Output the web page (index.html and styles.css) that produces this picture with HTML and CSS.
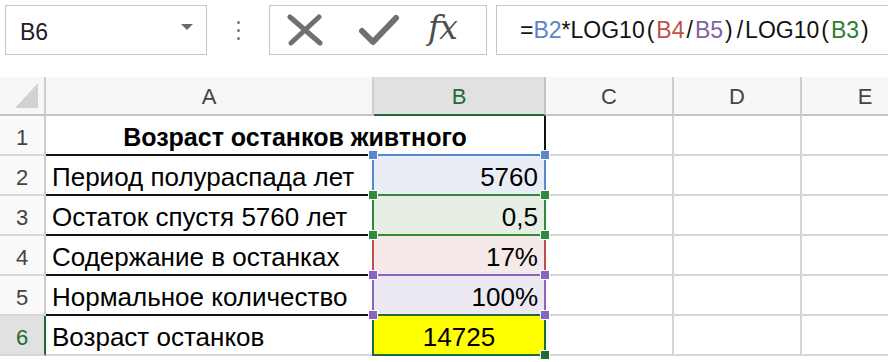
FILE: index.html
```html
<!DOCTYPE html>
<html>
<head>
<meta charset="UTF-8">
<title>Возраст останков</title>
<link rel="stylesheet" href="styles.css">
</head>
<body>
	<div class="bar">
		<div class="namebox">
			<span>B6</span>
			<svg class="drop" width="12" height="8" viewBox="0 0 12 8"><path d="M0 1 L12 1 L6 7 Z" fill="#6a6a6a"/></svg>
		</div>
		<div class="grip"><i></i><i></i><i></i></div>
		<div class="btns">
			<svg class="ico-x" width="36" height="32" viewBox="0 0 36 32">
				<path d="M3 3 L33 29 M32 3 L4 29" stroke="#707070" stroke-width="5" stroke-linecap="round" fill="none"/>
			</svg>
			<svg class="ico-ok" width="42" height="32" viewBox="0 0 42 32">
				<path d="M4 17 L15 28 L38 4" stroke="#707070" stroke-width="6" stroke-linecap="round" stroke-linejoin="round" fill="none"/>
			</svg>
			<span class="fx">fx</span>
		</div>
		<div class="formula">=<span class="c-blue">B2</span>*LOG10<span class="p">(</span><span class="c-red">B4</span><span class="p">/</span><span class="c-purple">B5</span><span class="p">)</span><span class="p">/</span>LOG10<span class="p">(</span><span class="c-green">B3</span><span class="p">)</span></div>
	</div>

	<div class="sheet">
		<!-- шапка столбцов -->
		<div class="hd corner"><svg width="46" height="37" viewBox="0 0 46 37"><path d="M15 31 L38 6 L38 31 Z" fill="#d2d2d2"/></svg></div>
		<div class="hd">A</div>
		<div class="hd sel">B</div>
		<div class="hd">C</div>
		<div class="hd">D</div>
		<div class="hd">E</div>

		<div class="rh">1</div>
		<div class="cell title">Возраст останков живтного</div>
		<div class="cell"></div>
		<div class="cell"></div>
		<div class="cell"></div>

		<div class="rh">2</div>
		<div class="cell txt">Период полураспада лет</div>
		<div class="cell num ref blue">5760</div>
		<div class="cell"></div>
		<div class="cell"></div>
		<div class="cell"></div>

		<div class="rh">3</div>
		<div class="cell txt">Остаток спустя 5760 лет</div>
		<div class="cell num ref green">0,5</div>
		<div class="cell"></div>
		<div class="cell"></div>
		<div class="cell"></div>

		<div class="rh">4</div>
		<div class="cell txt">Содержание в останках</div>
		<div class="cell num ref red">17%</div>
		<div class="cell"></div>
		<div class="cell"></div>
		<div class="cell"></div>

		<div class="rh">5</div>
		<div class="cell txt">Нормальное количество</div>
		<div class="cell num ref purple">100%</div>
		<div class="cell"></div>
		<div class="cell"></div>
		<div class="cell"></div>

		<div class="rh sel">6</div>
		<div class="cell txt last">Возраст останков</div>
		<div class="cell result">14725</div>
		<div class="cell"></div>
		<div class="cell"></div>
		<div class="cell"></div>
	</div>
</body>
</html>
```
FILE: styles.css
```css
/* общие */
html, body {
	margin: 0;
	background: #ffffff;
	overflow: hidden;
}

body {
	width: 888px;
	height: 362px;
	font-family: "Liberation Sans", Arial, sans-serif;
	color: #000000;
}

/* строка формул */
.bar {
	display: flex;
	align-items: stretch;
	height: 50px;
	padding: 5px 0 0 5px;
}

.namebox {
	display: flex;
	align-items: center;
	justify-content: space-between;
	box-sizing: border-box;
	width: 202px;
	padding: 0 13px 0 14px;
	border: 1px solid #c6c6c6;
	font-size: 23px;
	color: #222222;
}

.namebox span {
	padding-top: 4px;
}

.namebox .drop {
	margin-top: -6px;
}

.grip {
	display: flex;
	flex-direction: column;
	align-items: center;
	justify-content: center;
	gap: 5px;
	width: 62px;
}

.grip i {
	display: block;
	width: 3px;
	height: 3px;
	border-radius: 50%;
	background: #7a7a7a;
}

.btns {
	display: flex;
	align-items: center;
	box-sizing: border-box;
	width: 218px;
	padding-left: 17px;
	border: 1px solid #c6c6c6;
}

.btns .ico-ok {
	margin-left: 35px;
}

.btns .fx {
	margin-left: 28px;
	margin-top: -6px;
	font-family: "DejaVu Serif", "Liberation Serif", serif;
	font-style: italic;
	font-size: 33px;
	line-height: 1;
	letter-spacing: -1px;
	color: #4e4e4e;
}

.formula {
	flex: 1;
	box-sizing: border-box;
	margin-left: 9px;
	padding: 11px 0 0 23px;
	border: 1px solid #c6c6c6;
	border-right: none;
	font-size: 23px;
	white-space: nowrap;
	color: #111111;
}

.formula .p {
	margin: 0 2px;
}

.c-blue { color: #5b84c8; }
.c-red { color: #c0504d; }
.c-purple { color: #8064a2; }
.c-green { color: #2e7d32; }

/* таблица */
.sheet {
	display: grid;
	grid-template-columns: 46px 328px 172px 128px 128px 128px;
	grid-template-rows: 39px repeat(6, 40px);
	margin-top: 22px;
}

.sheet > div {
	box-sizing: border-box;
	border-right: 2px solid #d6d6d6;
	border-bottom: 2px solid #d6d6d6;
	white-space: nowrap;
	overflow: visible;
}

.hd {
	background: #f7f7f7;
	border-bottom-color: #c4c4c4 !important;
	border-right-color: #cdcdcd !important;
	font-size: 22px;
	line-height: 34px;
	padding-top: 3px;
	text-align: center;
	color: #444444;
}

.hd.corner {
	padding: 0;
	line-height: 0;
}

.hd.sel {
	background: #e1e1e1;
	color: #1e6b3c;
	border-bottom-color: #1e6b3c !important;
	border-right-color: #c4c4c4 !important;
}

.rh {
	background: #fafafa;
	border-right-color: #cdcdcd !important;
	font-size: 22px;
	line-height: 33px;
	padding-top: 5px;
	text-align: center;
	color: #444444;
}

.rh.sel {
	background: #e1e1e1;
	color: #1e6b3c;
	border-right-color: #1e6b3c !important;
}

.cell {
	font-size: 26px;
	line-height: 33px;
	padding: 5px 6px 0 6px;
}

.cell.title {
	grid-column: span 2;
	font-weight: bold;
	font-size: 25px;
	text-align: center;
	border-right-color: #111111 !important;
	border-bottom-color: #111111 !important;
}

.cell.txt {
	border-bottom-color: #111111 !important;
}

.cell.txt.last {
	border-bottom-color: #d6d6d6 !important;
}

.cell.num {
	text-align: right;
	padding-right: 6px;
}

.cell.result {
	text-align: center;
	background: #ffff00;
}

/* выделение ссылок формулы */
.ref, .result {
	position: relative;
}

.ref::before, .result::before {
	content: "";
	position: absolute;
	left: -2px;
	top: -2px;
	right: -2px;
	bottom: -2px;
	border: 2px solid var(--c);
}

.ref::after, .result::after {
	content: "";
	position: absolute;
	left: -5px;
	top: -5px;
	width: 8px;
	height: 8px;
	background: var(--c);
	box-shadow:
		172px 0 0 0 var(--c),
		0 40px 0 0 var(--c),
		172px 40px 0 0 var(--c),
		0 0 0 1px #ffffff,
		172px 0 0 1px #ffffff,
		0 40px 0 1px #ffffff,
		172px 40px 0 1px #ffffff;
}

.ref.blue { --c: #5b86d2; background: #e9edf6; }
.ref.green { --c: #2e8b3e; background: #e7efe5; }
.ref.red { --c: #c24d4d; background: #f6e9e9; }
.ref.purple { --c: #8865c2; background: #ede9f3; }
.result { --c: #1e6b3c; }

.ref.blue::before { z-index: 1; }
.ref.red::before { z-index: 2; }
.ref.purple::before { z-index: 3; }
.ref.green::before { z-index: 4; }
.result::before { z-index: 5; }

.ref.blue::after { z-index: 11; }
.ref.red::after { z-index: 12; }
.ref.purple::after { z-index: 13; }
.ref.green::after { z-index: 14; }

.result::after {
	z-index: 15;
	left: 167px;
	top: 35px;
	box-shadow: 0 0 0 1px #ffffff;
}
```
